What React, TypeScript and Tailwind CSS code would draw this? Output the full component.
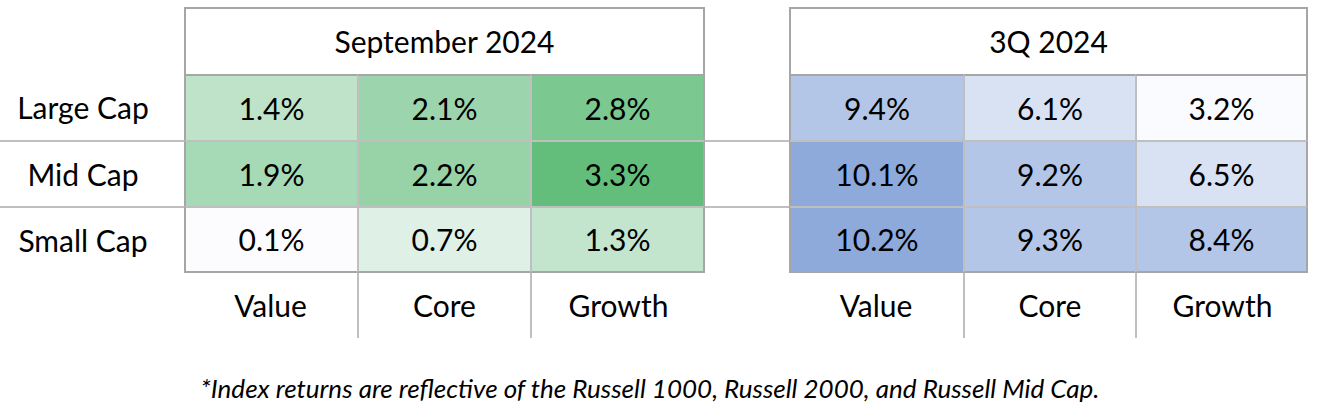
const green = [
  ["1.4%", "2.1%", "2.8%"],
  ["1.9%", "2.2%", "3.3%"],
  ["0.1%", "0.7%", "1.3%"],
];
const greenBg = [
  ["bg-[#bee3c9]", "bg-[#9cd5ad]", "bg-[#7bc890]"],
  ["bg-[#a6d9b5]", "bg-[#98d3a8]", "bg-[#63be7b]"],
  ["bg-[#fcfcff]", "bg-[#dff0e6]", "bg-[#c3e5ce]"],
];
const blue = [
  ["9.4%", "6.1%", "3.2%"],
  ["10.1%", "9.2%", "6.5%"],
  ["10.2%", "9.3%", "8.4%"],
];
const blueBg = [
  ["bg-[#b4c6e7]", "bg-[#d9e2f3]", "bg-[#fafbfe]"],
  ["bg-[#8eaadb]", "bg-[#b4c6e7]", "bg-[#d9e2f3]"],
  ["bg-[#8eaadb]", "bg-[#b4c6e7]", "bg-[#b4c6e7]"],
];
const labels = ["Large Cap", "Mid Cap", "Small Cap"];
const styles = ["Value", "Core", "Growth"];

const dark = "border-[#a6a6a6]";
const light = "border-[#bfbfbf]";

// per-row top border: row 0 sits under the header (dark), the rest use the light rule
function cellBorder(row: number, col: number) {
  const top = row === 0 ? `border-t-2 ${dark}` : `border-t-2 ${light}`;
  const bottom = row === 2 ? "border-b-2 border-b-[#a6a6a6]" : "";
  const left = col === 0 ? "border-l-2 border-l-[#a6a6a6]" : "border-l-2 border-l-[#bfbfbf]";
  const right = col === 2 ? "border-r-2 border-r-[#a6a6a6]" : "";
  return `${top} ${bottom} ${left} ${right}`;
}

function Panel({
  title,
  values,
  bgs,
  widths,
}: {
  title: string;
  values: string[][];
  bgs: string[][];
  widths: string[];
}) {
  return (
    <div className="flex flex-col">
      <div className={`h-[67px] border-t-2 border-l-2 border-r-2 ${dark} flex items-center justify-center`}>
        {title}
      </div>
      {values.map((row, r) => (
        <div key={r} className={`flex ${r === 2 ? "h-[67px]" : "h-[66px]"}`}>
          {row.map((v, c) => (
            <div
              key={c}
              className={`${widths[c]} ${bgs[r][c]} ${cellBorder(r, c)} flex items-center justify-center`}
            >
              {v}
            </div>
          ))}
        </div>
      ))}
      <div className="flex h-[65px]">
        {styles.map((s, c) => (
          <div
            key={s}
            className={`${widths[c]} ${c > 0 ? `border-l-2 ${light}` : ""} flex items-center justify-center`}
          >
            {s}
          </div>
        ))}
      </div>
    </div>
  );
}

export default function App() {
  return (
    <div
      className="w-[1318px] h-[420px] bg-white text-black text-[30px] pt-[7px]"
      style={{ fontFamily: "Lato, 'Open Sans', sans-serif" }}
    >
      <div className="flex">
        <div className="w-[184px] flex flex-col">
          <div className="h-[67px]" />
          {labels.map((l, i) => (
            <div
              key={l}
              className={`${i === 2 ? "h-[67px]" : "h-[66px]"} ${i > 0 ? `border-t-2 ${light}` : ""} flex items-center justify-center pr-[18px]`}
            >
              {l}
            </div>
          ))}
        </div>
        <Panel title="September 2024" values={green} bgs={greenBg} widths={["w-[173px]", "w-[173px]", "w-[175px]"]} />
        <div className="w-[84px] flex flex-col">
          <div className="h-[67px]" />
          <div className="h-[66px]" />
          <div className={`h-[66px] border-t-2 ${light}`} />
          <div className={`h-[67px] border-t-2 ${light}`} />
        </div>
        <Panel title="3Q 2024" values={blue} bgs={blueBg} widths={["w-[174px]", "w-[172px]", "w-[173px]"]} />
      </div>
      <p className="mt-[31px] text-center italic text-[26px] pr-[18px]">
        *Index returns are reflective of the Russell 1000, Russell 2000, and Russell Mid Cap.
      </p>
    </div>
  );
}
